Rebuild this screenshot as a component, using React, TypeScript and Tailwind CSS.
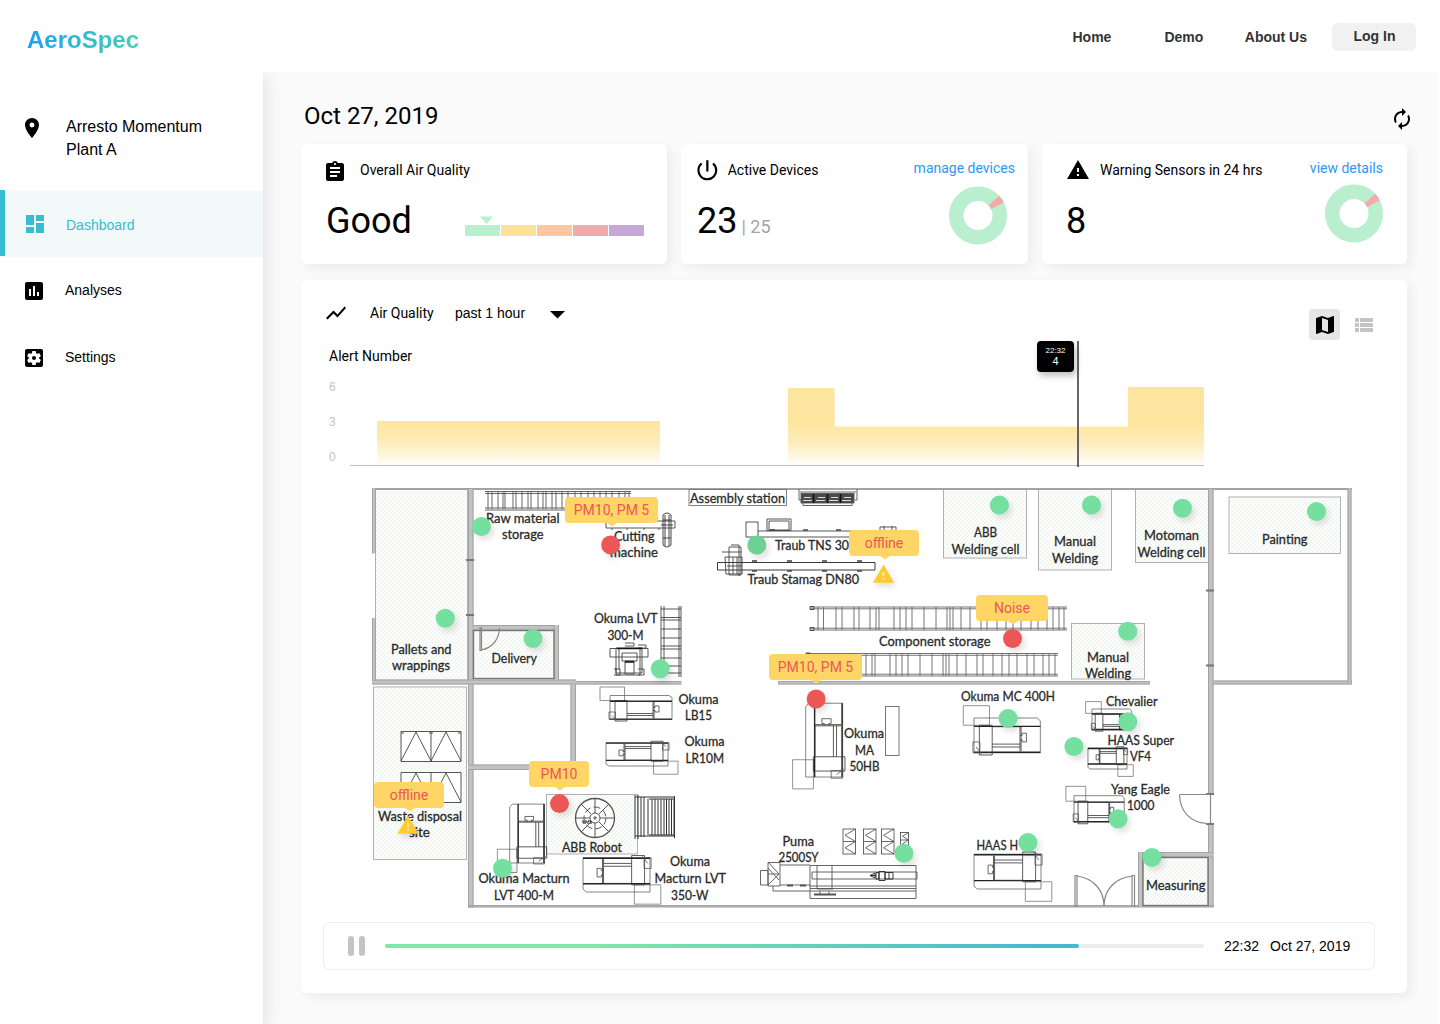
import React from "react";
import {
  MdPlace,
  MdDashboard,
  MdAssessment,
  MdSettingsApplications,
  MdAssignment,
  MdPowerSettingsNew,
  MdWarning,
  MdAutorenew,
  MdShowChart,
  MdMap,
  MdViewList,
} from "react-icons/md";

const HELV = "font-['Liberation_Sans',Arial,sans-serif]";

function Header() {
  return (
    <header className={`relative z-20 flex h-[72px] items-start justify-between bg-white pl-[27px] pr-6 ${HELV}`}>
      <div className="mt-[25px] bg-gradient-to-r from-[#1fa1ee] to-[#48cdb8] bg-clip-text text-2xl leading-[30px] font-bold text-transparent">
        AeroSpec
      </div>
      <nav className="mt-[23px] flex items-start text-sm leading-7 font-bold text-[#333]">
        <a className="mr-[53px]">Home</a>
        <a className="mr-[41.500px]">Demo</a>
        <a className="mr-[25px]">About Us</a>
        <a className="h-7 w-[84px] rounded-md bg-[#f1f1f1] pl-px text-center leading-[27px]">Log In</a>
      </nav>
    </header>
  );
}

function NavItem({ icon, label, active = false }: { icon: React.ReactNode; label: string; active?: boolean }) {
  return (
    <div
      className={
        active
          ? "flex h-[66px] items-center bg-[#f1faf9] pl-[23px] text-[#38bcd2]"
          : "flex h-[67px] items-center pl-[22px] text-black"
      }
    >
      {icon}
      <span className={active ? "ml-[19px] pt-[2px] text-sm" : "ml-[19px] pb-[2px] text-sm"}>{label}</span>
    </div>
  );
}

function Sidebar() {
  return (
    <aside className={`relative z-10 w-[263px] shrink-0 bg-white shadow-[4px_4px_16px_rgba(0,0,0,0.09)] ${HELV}`}>
      <div className="flex h-[119px] items-start pt-11 pl-5">
        <MdPlace size={24} />
        <div className="ml-[22px] -mt-px text-base leading-[23px]">
          Arresto Momentum
          <br />
          Plant A
        </div>
      </div>
      <div className="relative">
        <NavItem icon={<MdDashboard size={24} />} label="Dashboard" active />
        <span className="absolute -top-px left-0 h-[66px] w-[5px] bg-[#38bcd2]" />
      </div>
      <NavItem icon={<MdAssessment size={24} />} label="Analyses" />
      <NavItem icon={<MdSettingsApplications size={24} />} label="Settings" />
    </aside>
  );
}

const CARD = "rounded-md bg-white shadow-[4px_4px_12px_rgba(0,0,0,0.06)]";

function Donut() {
  return (
    <svg width="58" height="59" viewBox="-29 -29.5 58 59">
      <circle r="21.75" fill="none" stroke="#b9efcf" strokeWidth="14.5" />
      <path d="M21.2 -19.8 A29 29 0 0 1 25.9 -13 L13 -6.6 A14.5 14.5 0 0 0 10.6 -9.9 Z" fill="#f6a9a9" />
    </svg>
  );
}

function QualityCard() {
  return (
    <section className={`h-[120px] w-[366px] ${CARD}`}>
      <div className="mt-3 flex h-7 items-center pl-[22px]">
        <MdAssignment size={24} className="mt-1" />
        <span className="ml-[13px] text-sm">Overall Air Quality</span>
      </div>
      <div className="flex h-[60px] items-start pl-[25px]">
        <span className="mt-[15px] w-[139px] text-[36px] leading-[44px]">Good</span>
        <div className="mt-8">
          <svg width="13" height="8" viewBox="0 0 13 8" className="ml-[15px] block">
            <path d="M0 0.5H13L6.5 8Z" fill="#b9efcf" />
          </svg>
          <div className="mt-[0.5px] flex gap-px">
            <span className="h-[11.5px] w-[35px] bg-[#b9efcf]" />
            <span className="h-[11.5px] w-[35px] bg-[#fbe29a]" />
            <span className="h-[11.5px] w-[35px] bg-[#fec7a0]" />
            <span className="h-[11.5px] w-[35px] bg-[#eeacac]" />
            <span className="h-[11.5px] w-[35px] bg-[#c5a8d5]" />
          </div>
        </div>
      </div>
    </section>
  );
}

function DevicesCard() {
  return (
    <section className={`flex h-[120px] w-[347px] justify-between ${CARD}`}>
      <div className="pl-[13px]">
        <div className="mt-3 flex h-7 items-center">
          <MdPowerSettingsNew size={26.7} />
          <span className="ml-[7px] text-sm">Active Devices</span>
        </div>
        <div className="mt-[15px] flex pl-[3px]">
          <span className="text-[36px] leading-[44px]">23</span>
          <span className="ml-1 pt-[6px] text-lg leading-[44px] text-[#a5a5a5]">| 25</span>
        </div>
      </div>
      <div className="flex flex-col items-end pr-[13px]">
        <a className="mt-[14px] text-sm text-[#2f96f7]">manage devices</a>
        <div className="mt-2 mr-2">
          <Donut />
        </div>
      </div>
    </section>
  );
}

function WarningCard() {
  return (
    <section className={`flex h-[120px] w-[365px] justify-between ${CARD}`}>
      <div className="pl-6">
        <div className="mt-3 flex h-7 items-center">
          <MdWarning size={24} />
          <span className="ml-[10px] text-sm">Warning Sensors in 24 hrs</span>
        </div>
        <div className="mt-[15px] text-[36px] leading-[44px]">8</div>
      </div>
      <div className="flex flex-col items-end pr-6">
        <a className="mt-[14px] text-sm text-[#2f96f7]">view details</a>
        <div className="mt-[6px]">
          <Donut />
        </div>
      </div>
    </section>
  );
}

function AlertChart() {
  return (
    <div className="relative flex h-[126px]">
      <div className={`w-[49px] pt-[38px] pl-7 text-xs leading-4 text-[#c4c4c4] ${HELV}`}>
        <div className="h-[35px]">6</div>
        <div className="h-[35px]">3</div>
        <div>0</div>
      </div>
      <svg width="856" height="126" viewBox="350 341 856 126">
        <defs>
          <linearGradient id="area" gradientUnits="userSpaceOnUse" x1="0" y1="424" x2="0" y2="465">
            <stop offset="0" stopColor="#fee6a1" />
            <stop offset="0.45" stopColor="#feedbb" />
            <stop offset="1" stopColor="#fffefa" />
          </linearGradient>
        </defs>
        <path d="M377 421H660V465H377Z" fill="url(#area)" />
        <path d="M788 388H834.5V426.5H1128V387H1204V465H788Z" fill="url(#area)" />
        <path d="M350 465.5H1204" stroke="#bdbdbd" />
        <path d="M1078 341V467" stroke="#666" strokeWidth="2" />
      </svg>
      <div
        className={`absolute top-0 left-[736px] flex h-[31px] w-[37px] flex-col items-center rounded bg-black pt-1 text-white shadow-[2px_4px_6px_rgba(0,0,0,0.25)] ${HELV}`}
      >
        <span className="text-[8px] leading-[11px]">22:32</span>
        <span className="text-[11px] leading-[11px]">4</span>
      </div>
    </div>
  );
}

function Hatch({ x, y, w, h }: { x: number; y: number; w: number; h: number }) {
  return <rect x={x} y={y} width={w} height={h} fill="url(#hatch)" stroke="#b0b0b0" />;
}

function Wall({ x, y, w, h }: { x: number; y: number; w: number; h: number }) {
  const along = w > h;
  return (
    <g>
      <rect x={x} y={y} width={w} height={h} fill="#c2c2c2" />
      {along ? (
        <path d={`M${x} ${y + 0.5}h${w}M${x} ${y + h - 0.5}h${w}`} stroke="#9b9b9b" strokeWidth="0.8" />
      ) : (
        <path d={`M${x + 0.5} ${y}v${h}M${x + w - 0.5} ${y}v${h}`} stroke="#9b9b9b" strokeWidth="0.8" />
      )}
    </g>
  );
}

function Machine({ t }: { t: string }) {
  return (
    <g transform={t} fill="none" stroke="#555" strokeWidth="0.8">
      <rect x="-10" y="-8.5" width="24.5" height="13.5" stroke="#777" vectorEffect="non-scaling-stroke" />
      <path d="M0 24V0H59L62 2V24Z" stroke="#666" vectorEffect="non-scaling-stroke" />
      <path d="M0 5.8H62M0 23.6H62" stroke="#222" strokeWidth="1.4" vectorEffect="non-scaling-stroke" />
      <path d="M5 5V25.5H17V5ZM17 6H43V23M17 18H43M17 20H43M44 6V23" stroke="#333" vectorEffect="non-scaling-stroke" />
      <path d="M-1 16.5H5.5V24H-1ZM2 20l5 5" vectorEffect="non-scaling-stroke" />
      <path d="M43 12H45V10.5H49V16.5H45V15H43" stroke="#444" vectorEffect="non-scaling-stroke" />
    </g>
  );
}

function Ladder({ x, y, w, h, rungs }: { x: number; y: number; w: number; h: number; rungs: number[] }) {
  return (
    <g fill="none" stroke="#666" strokeWidth="0.9">
      <path d={`M${x} ${y}h${w}M${x} ${y + 1.8}h${w}M${x} ${y + h - 1.8}h${w}M${x} ${y + h}h${w}`} />
      <path d={rungs.map((r) => `M${x + r} ${y}v${h}`).join("")} />
      <path d={`M${x} ${y - 0.5}h4v3h-4zM${x} ${y + h - 2.5}h4v3h-4z`} stroke="#444" />
    </g>
  );
}

function Crate({ x, y, w, h }: { x: number; y: number; w: number; h: number }) {
  return (
    <g fill="none" stroke="#444" strokeWidth="0.8">
      <rect x={x} y={y} width={w} height={h} />
      <path
        d={`M${x} ${y + h / 2}h${w}M${x + w} ${y}L${x + 2} ${y + h / 4}L${x + w} ${y + h / 2}L${x + 2} ${y + (3 * h) / 4}L${x + w} ${y + h}`}
      />
    </g>
  );
}

const labels: [string, number, number, number][] = [
  ["Raw material", 486, 559.5, 523],
  ["storage", 502, 543.5, 539],
  ["Cutting", 614, 654.5, 541],
  ["machine", 610, 658, 557],
  ["Assembly station", 690, 785, 503],
  ["Pallets and", 391, 451.5, 654],
  ["wrappings", 392, 450, 670],
  ["Delivery", 491.5, 537, 663],
  ["Okuma LVT", 594, 657.5, 623],
  ["300-M", 607.5, 643.5, 640],
  ["Okuma", 678.5, 718.5, 704],
  ["LB15", 685, 712, 720],
  ["Okuma", 684.5, 724.5, 746],
  ["LR10M", 685.5, 724, 763],
  ["Waste disposal", 378, 462, 821],
  ["site", 409, 430, 837],
  ["ABB Robot", 562, 622, 852],
  ["Okuma Macturn", 478.5, 569.5, 883],
  ["LVT 400-M", 494, 554, 900],
  ["Okuma", 670, 710, 866],
  ["Macturn LVT", 654.5, 726, 883],
  ["350-W", 671, 708.5, 900],
  ["Traub TNS 30", 775, 849, 550],
  ["Traub Stamag DN80", 747.5, 859, 584],
  ["ABB", 974, 997, 537],
  ["Welding cell", 951.5, 1019.5, 554],
  ["Manual", 1054, 1096, 546],
  ["Welding", 1052, 1098, 563],
  ["Motoman", 1144, 1199, 540],
  ["Welding cell", 1137.5, 1205.5, 557],
  ["Painting", 1262, 1307.5, 544],
  ["Component storage", 879, 990.5, 646],
  ["Manual", 1087, 1129, 662],
  ["Welding", 1085, 1131, 678],
  ["Okuma", 844, 884, 738],
  ["MA", 855, 874, 755],
  ["50HB", 849.5, 879.5, 771],
  ["Okuma MC 400H", 961, 1055, 701],
  ["Chevalier", 1106, 1157.5, 706],
  ["HAAS Super", 1107.5, 1174, 745],
  ["VF4", 1130, 1151, 761],
  ["Yang Eagle", 1111, 1170, 794],
  ["1000", 1127, 1154.5, 810],
  ["Puma", 782.5, 814, 846],
  ["2500SY", 778.5, 818.5, 862],
  ["HAAS H", 976.5, 1018, 850],
  ["Measuring", 1146, 1205.5, 890],
];

const storageRungs = [8, 13.5, 26, 32, 44, 49, 60, 66, 69, 84, 90, 96, 102, 114, 126, 137, 140, 143, 151, 160, 171, 177, 187, 196, 203, 211, 221, 228, 237, 243];

function FloorPlan() {
  return (
    <svg width="980" height="421" viewBox="372 487 980 421" className="block">
      <defs>
        <pattern id="hatch" width="4" height="4" patternUnits="userSpaceOnUse">
          <rect width="4" height="4" fill="#fcfefc" />
          <path d="M-1 1L1 -1M0 4L4 0M3 5L5 3" stroke="#e4ebe4" strokeWidth="0.7" />
        </pattern>
      </defs>

      <Hatch x={375.5} y={489.5} w={92} h={191} />
      <Hatch x={373.5} y={687} w={93} h={172.5} />
      <Hatch x={943.5} y={489.5} w={83} h={68.5} />
      <Hatch x={1038.5} y={489.5} w={73} h={80.5} />
      <Hatch x={1135.5} y={489.5} w={73} h={73} />
      <Hatch x={1229} y={497} w={111.5} h={56.5} />
      <Hatch x={1071.5} y={623.5} w={73} h={55.5} />
      <Hatch x={546.5} y={794.5} w={91} h={59.5} />

      <Wall x={372} y={488} w={980} h={2} />
      <Wall x={372} y={488} w={4} h={65.5} />
      <Wall x={372} y={618} w={4} h={66} />
      <Wall x={468} y={489} w={5.5} h={419} />
      <Wall x={372} y={679.5} w={204} h={5} />
      <Wall x={576} y={681} w={105.5} h={3.5} />
      <Wall x={473} y={625} w={86} h={5.5} />
      <Wall x={553.5} y={625} w={5.5} h={55} />
      <Wall x={570.5} y={684} w={5.5} h={86} />
      <Wall x={468} y={764.5} w={108} h={5.5} />
      <Wall x={778} y={681} w={372} h={3.5} />
      <Wall x={1208} y={489} w={5.5} h={305} />
      <Wall x={1208} y={824} w={5.5} h={83} />
      <Wall x={1213} y={680.5} w={139} h={4} />
      <Wall x={1347.5} y={488} w={4} h={196} />
      <Wall x={468} y={905} w={746} h={2.4} />
      <Wall x={1138} y={852} w={75} h={5.5} />
      <Wall x={1138} y={852} w={5} h={55} />
      <path d="M466 560h8M466 615h8M1206 590.5h8M1206 665.5h8M1206 794h8M1206 824h8" stroke="#777" strokeWidth="2" />
      <rect x="473.5" y="630.5" width="80.5" height="48" fill="url(#hatch)" stroke="#777" strokeWidth="1.4" />
      <rect x="1143" y="857.5" width="65" height="48" fill="url(#hatch)" stroke="#777" strokeWidth="1.4" />

      <g fill="none" stroke="#888" strokeWidth="1.2">
        <path d="M480 627V650.5H481.5V627M481 650C492 648 499 640 499.500 628" />
        <path d="M1179.500 794.500H1210M1179.500 795C1180 811 1190 823 1208 823.500" />
        <path d="M1075 875.500H1077V907M1075 875V907M1077 876C1093 878 1104 890 1104 906C1104 890 1115 878 1132 876M1132 906V875.500H1134.500V907" />
        <path d="M1210.500 795V823" />
      </g>

      <g stroke="#555" strokeWidth="0.9" fill="none">
        <rect x="689" y="489.500" width="97.500" height="16" stroke="#777" />
        <path d="M799 489V500H801M857 489V500H855M800 492H856" />
        <rect x="801" y="493.500" width="53" height="9.500" fill="#4a4a4a" />
        <path d="M804 497.500H811M818 497.500H825M831 497.500H838M844 497.500H851M803 500.500H812M816 500.500H825M829 500.500H838M842 500.500H851" stroke="#eee" />
        <path d="M813.500 494V503M827.500 494V503M840.500 494V503" stroke="#111" strokeWidth="1.500" />
        <path d="M803 505.500H852M803 503V505.500M852 503V505.500" />
      </g>

      <g fill="none" stroke="#777" strokeWidth="0.9">
        <path d="M485 491.500H631M485 493.500H631M485 508H570M485 510H570" stroke="#555" />
        <path
          stroke="#555"
          d="M488 491v18M492 491v18M498 491v18M503 491v18M505 491v18M513 491v18M516 491v18M522 491v18M528 491v18M531 491v18M538 491v18M543 491v18M546 491v18M552 491v18M556 491v18M562 491v18M568 491v10M575 491v10M581 491v10M588 491v10M594 491v10M600 491v10M606 491v10M612 491v10M619 491v10M625 491v10M629 491v10"
        />
      </g>

      <g fill="none" stroke="#444" strokeWidth="0.9">
        <path d="M606 521H675V528H606ZM612 528v2M627 528v2M644 528v2M659 528v2" />
        <path d="M663 515q4-4 8 0V545q-4 4-8 0ZM665 515V546M669 515V546M663 520h8M663 538h8M661 525h12" stroke="#333" />
      </g>

      <g fill="none" stroke="#444" strokeWidth="0.9">
        <path d="M661 606V677M664 606V677M679 606V677M681 606V677" />
        <path d="M661 609h20M661 617.500h20M661 620h20M661 629h20M661 638h20M661 646h20M661 649h20M661 658h20M661 666h20M661 673h20" />
      </g>

      <g fill="none" stroke="#444" strokeWidth="0.9">
        <path d="M616 648V673H642V648ZM610 648.500H648V657H610ZM619 648V670M640 648V675H616V668M622 653H637V661H622ZM625 661H634V674H625ZM625 643H634V646H625M638 645h8v3h-8M614 669h6v6h-6M638 669h6v6h-6" />
        <path d="M617 648.500H642M625 662H634" stroke="#111" strokeWidth="1.4" />
      </g>

      <g fill="none" stroke="#444" strokeWidth="0.9">
        <path d="M746 522H758V537H746ZM758 531H900M758 537H900M767 519H791V530.500H767ZM769 521H789V530H769ZM880 527H896V534H880ZM884 526v8M892 526v8" />
        <path d="M717.500 562.500H875V570H717.500Z" stroke="#222" />
        <path d="M729 547H741V575H729ZM731 545H739V576M725 557H742V574H726ZM733 557V574M737 557V574M722 552H742M727 566H742" />
        <path d="M752 561h5M787 561h5M822 561h5M857 561h5M752 571h5M787 571h5M822 571h5M857 571h5M770 530h5M803 530h5M836 530h5" strokeWidth="1.6" />
      </g>

      <Ladder x={810} y={607} w={257} h={23} rungs={[...storageRungs, 249, 254]} />
      <Ladder x={806} y={653.500} w={252} h={22.500} rungs={[...storageRungs, 249]} />

      <g fill="none" stroke="#444" strokeWidth="0.9">
        <path fill="#fff" d="M401 731.500H461V761.500H401Z" />
        <path d="M431 731V762M401 761L416 732L431 761L446 732L461 761M401 733h3M458 733h3M429 733h4" />
        <path fill="#fff" d="M401 772.500H461V802.500H401Z" />
        <path d="M431 772V803M401 802L416 773L431 802L446 773L461 802" />
      </g>

      <g fill="none" stroke="#555" strokeWidth="1">
        <circle cx="595" cy="818" r="19.500" strokeWidth="1.300" fill="#fff" />
        <circle cx="595" cy="818" r="11" strokeDasharray="7 3" />
        <circle cx="595" cy="818" r="5" />
        <path d="M575 818H590M600 818H614M595 799V813M595 823V837M581 804L591 814M599 822L609 832M609 804L599 814M591 822L581 832M593 818H597M595 816V820" />
        <path d="M583 820v3h3v-3M588 824v-3h3v3" stroke="#111" />
      </g>

      <g fill="none" stroke="#333" strokeWidth="1">
        <path d="M635 795V839M638 795V839M635 797H675M635 836H675M648 799V835M649 799H674V835H649" />
        <path d="M641 797v40M644 797v40M652 799v36M655 799v36M658 799v36M661 799v36M664 799v36M666.500 799v36M669 799v36M671.500 799v36M674.500 796v42" />
      </g>

      <Machine t="translate(610 695.500)" />
      <Machine t="translate(668 766) scale(-1 -0.970)" />
      <Machine t="translate(650 892) scale(-1.080 -1.430)" />
      <Machine t="translate(509.700 863) rotate(-90) scale(0.950 1.450)" />
      <Machine t="translate(805.700 777) rotate(-90) scale(1.190 1.540)" />
      <Machine t="translate(974 718) scale(1.070 1.450)" />
      <Machine t="translate(1092 709) scale(0.640 0.870)" />
      <Machine t="translate(1127 769) scale(-0.630 -0.870)" />
      <Machine t="translate(1074 795.700) scale(0.810 1.100)" />
      <Machine t="translate(1041 889) scale(-1.080 -1.450)" />
      <rect x="885.500" y="706.500" width="13.500" height="49" fill="none" stroke="#777" />

      <Crate x={843} y={829} w={12.500} h={25} />
      <Crate x={863.500} y={829} w={12.500} h={25} />
      <Crate x={881.500} y={829} w={12.500} h={25} />
      <Crate x={900.500} y={832.500} w={8} h={15} />
      <g fill="none" stroke="#555" strokeWidth="0.900">
        <path d="M810 865.500H916V898.500H810ZM760.500 870.500H768V885H760.500ZM768 862.500H780V886H768ZM780 865H810M773 886V891H810M780 885H810M768 862L779 874L768 885M768 874H779M768 868L779 880" />
        <path d="M812 872H917V879H812ZM817 866V889M832 866V889M810 886H916M810 888.500H916M810 891H916M817 889H833M820 891V895M829 891V895" />
        <path d="M876 875.500H870M870 875.500L875 873V878ZM876 872.500H879V879H876ZM879 871.500H885V880.500H879ZM885 872.500H893V879H885ZM889 872.500V879" stroke="#222" />
        <path d="M814 894.500H836M787 885.500h6M800 885.500h6" strokeWidth="1.800" />
      </g>

      <g fontFamily="Lato, sans-serif" fontSize="13" fill="#2a2a2a" stroke="#2a2a2a" strokeWidth="0.300">
        {labels.map(([text, x1, x2, y], i) => (
          <text key={i} x={x1} y={y} textLength={x2 - x1} lengthAdjust="spacingAndGlyphs">
            {text}
          </text>
        ))}
      </g>
    </svg>
  );
}

const okSensors: [number, number][] = [
  [481.5, 526.5], [445.3, 618.2], [533, 638.5], [660.2, 668.7], [999.4, 505.1],
  [1091.5, 505], [1182.5, 508.3], [1316.5, 511.5], [1127.7, 631.2], [1008, 718.5], [1127.8, 721.7],
  [1073.9, 746.5], [1118, 818.8], [1027.9, 842.5], [1151.9, 857.4], [903.9, 853.3], [502.5, 868.3],
];
const badSensors: [number, number][] = [[610.6, 544.9], [1012.5, 638.5], [816.1, 699], [559.5, 803.6]];
const offlineSensors: [number, number][] = [[883.5, 574], [408, 825]];
const tips: [string, number, number, number, number][] = [
  ["PM10, PM 5", 565, 497, 93, 47],
  ["offline", 849, 530, 70, 36],
  ["Noise", 976, 595, 72, 37],
  ["PM10, PM 5", 769, 654, 93, 47],
  ["PM10", 529, 761, 60, 31],
  ["offline", 374, 782, 70, 36],
];

const place = (x: number, y: number, r: number) => ({
  transform: `translate(${x - 372 - r}px, ${y - 487 - r}px)`,
});

const PIN = "absolute top-0 left-0 size-[19px] rounded-full shadow-[3px_4px_6px_rgba(0,0,0,0.12)]";

function SensorMap() {
  return (
    <div className="relative ml-[71px] h-[421px] w-[980px]">
      <FloorPlan />
      {okSensors.map(([x, y], i) => (
        <span key={i} className={`${PIN} bg-[#75dfa0]`} style={place(x, y, 9.5)} />
      ))}
      <span className={`${PIN} bg-[#6dd095]`} style={place(756.8, 545, 9.5)} />
      {badSensors.map(([x, y], i) => (
        <span key={i} className={`${PIN} bg-[#eb5757]`} style={place(x, y, 9.5)} />
      ))}
      {offlineSensors.map(([x, y], i) => (
        <MdWarning
          key={i}
          size={23}
          className="absolute top-0 left-0 text-[#ffcb2d] drop-shadow-[2px_3px_3px_rgba(0,0,0,0.15)]"
          style={place(x, y, 11.5)}
        />
      ))}
      {tips.map(([text, x, y, w, tail], i) => (
        <div
          key={i}
          className="absolute h-[26px] rounded bg-[#ffd666] text-center text-sm leading-[26px] text-[#eb5757]"
          style={{ left: x - 372, top: y - 487, width: w }}
        >
          {text}
          <svg width="10" height="4" viewBox="0 0 10 4" className="absolute top-[26px]" style={{ left: tail - 5 }}>
            <path d="M0 0H10L5 3.500Z" fill="#ffd666" />
          </svg>
        </div>
      ))}
    </div>
  );
}

function Player() {
  return (
    <div className={`mt-[14px] ml-[22px] flex h-12 w-[1052px] items-center rounded-md border border-[#ededed] pl-6 text-sm ${HELV}`}>
      <span className="h-5 w-[6px] rounded-full bg-[#c4c4c4]" />
      <span className="ml-[5px] h-5 w-[6px] rounded-full bg-[#c4c4c4]" />
      <div className="ml-5 h-1 w-[819px] rounded-full bg-[#ededed]">
        <div className="h-1 w-[694px] rounded-full bg-linear-[90deg,#7ee8a6_0%,#7ee8a6_30%,#45bad0_95%]" />
      </div>
      <span className="ml-5">22:32</span>
      <span className="ml-[11px]">Oct 27, 2019</span>
    </div>
  );
}

function AirQualityPanel() {
  return (
    <section className={`mt-4 h-[713px] w-[1106px] ${CARD}`}>
      <div className="flex h-[61px] items-start justify-between pt-[21px] pl-[23px]">
        <div className="flex h-6 items-center text-sm">
          <MdShowChart size={24} />
          <span className="ml-[22px] w-[85px]">Air Quality</span>
          <span className={`w-[95px] ${HELV}`}>past 1 hour</span>
          <svg width="15" height="8" viewBox="0 0 15 8" className="mt-[3px]">
            <path d="M0 0H15L7.500 7.500Z" />
          </svg>
        </div>
        <div className="mt-2 mr-[31.500px] flex items-center">
          <span className="flex size-[31px] items-center justify-center rounded bg-[#e5e5e5]">
            <MdMap size={24} />
          </span>
          <MdViewList size={24} className="ml-[11.500px] text-[#c4c4c4]" />
        </div>
      </div>
      <div className="relative">
        <div className="absolute top-[5px] left-7 text-sm">Alert Number</div>
        <AlertChart />
      </div>
      <div className="mt-5">
        <SensorMap />
      </div>
      <Player />
    </section>
  );
}

export default function App() {
  return (
    <div className="h-[1024px] w-[1440px] overflow-hidden bg-white font-[Roboto,sans-serif] text-black">
      <Header />
      <div className="flex h-[952px]">
        <Sidebar />
        <main className="w-[1175px] bg-[#fafafa] pt-7 pl-[38px]">
          <div className="flex h-11 w-[1113px] items-start justify-between pl-[3px]">
            <h1 className="text-2xl leading-8">Oct 27, 2019</h1>
            <MdAutorenew size={24} className="mt-[7px]" />
          </div>
          <div className="flex gap-[14px]">
            <QualityCard />
            <DevicesCard />
            <WarningCard />
          </div>
          <AirQualityPanel />
        </main>
      </div>
    </div>
  );
}
